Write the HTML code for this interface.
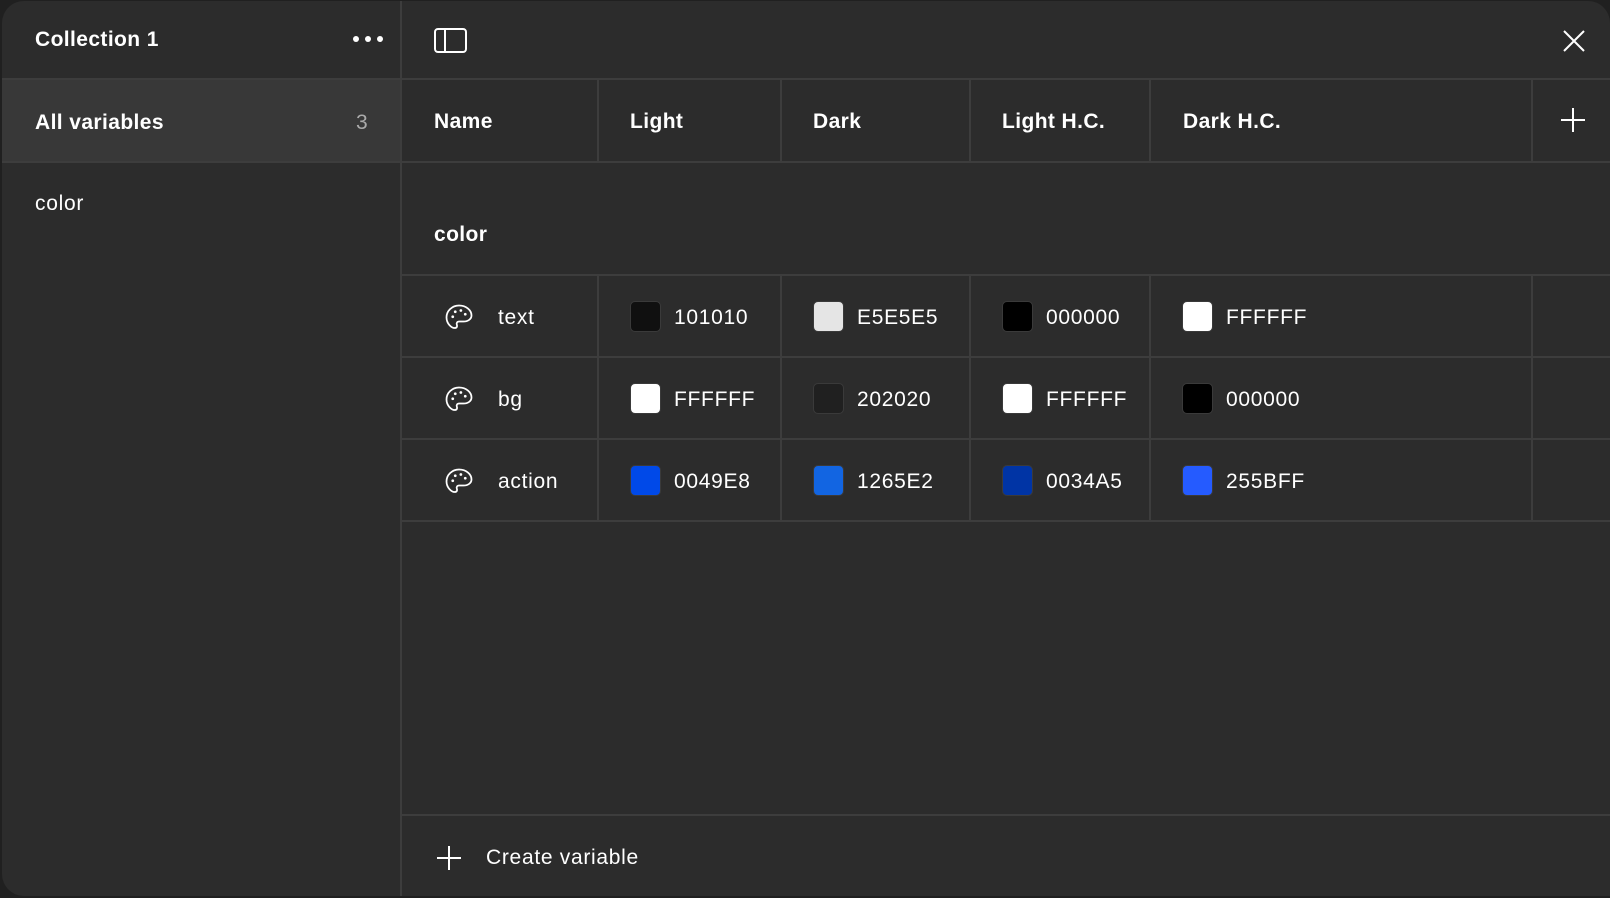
<!DOCTYPE html>
<html><head><meta charset="utf-8"><style>
*{box-sizing:border-box;margin:0;padding:0}
html,body{width:1610px;height:898px;background:#202020;overflow:hidden;font-family:"Liberation Sans",sans-serif;color:#fff}
.panel{position:absolute;left:2px;top:1px;width:1608px;height:895px;background:#2c2c2c;border-radius:22px 22px 0 22px;overflow:hidden}
.abs{position:absolute}
.hl{position:absolute;height:2px;background:#3d3d3d}
.vl{position:absolute;width:2px;background:#3d3d3d}
.t{position:absolute;font-size:21px;line-height:1;white-space:nowrap;letter-spacing:0.7px}
.b{font-weight:bold;letter-spacing:0.4px}
.sw{position:absolute;width:31px;height:31px;border-radius:5px;border:1px solid #3a3a3a}
</style></head><body>
<div class="panel">
  <div class="abs" style="left:0;top:78px;width:398px;height:83px;background:#383838"></div>
  <div class="vl" style="left:398px;top:0;height:895px"></div>
  <div class="hl" style="left:0;top:77px;width:1608px"></div>
  <div class="hl" style="left:0;top:160px;width:1608px"></div>
  <div class="t b" style="left:33px;top:28px">Collection 1</div>
  <div class="abs" style="left:351px;top:35px;width:6px;height:6px;border-radius:3px;background:#fff"></div>
  <div class="abs" style="left:363px;top:35px;width:6px;height:6px;border-radius:3px;background:#fff"></div>
  <div class="abs" style="left:375px;top:35px;width:6px;height:6px;border-radius:3px;background:#fff"></div>
  <div class="t b" style="left:33px;top:111px">All variables</div>
  <div class="t" style="left:354px;top:111px;color:#aaa">3</div>
  <div class="t" style="left:33px;top:192px">color</div>

  <svg class="abs" style="left:432px;top:27px" width="34" height="26" viewBox="0 0 34 26"><rect x="1" y="1" width="31" height="23" rx="3" fill="none" stroke="#fff" stroke-width="2"/><line x1="11" y1="1" x2="11" y2="24" stroke="#fff" stroke-width="2"/></svg>
  <svg class="abs" style="left:1560px;top:28px" width="24" height="24" viewBox="0 0 24 24"><path d="M2 2L22 22M22 2L2 22" stroke="#fff" stroke-width="2"/></svg>

  <div class="vl" style="left:595px;top:78px;height:82px"></div>
  <div class="vl" style="left:778px;top:78px;height:82px"></div>
  <div class="vl" style="left:967px;top:78px;height:82px"></div>
  <div class="vl" style="left:1147px;top:78px;height:82px"></div>
  <div class="vl" style="left:1529px;top:78px;height:82px"></div>
  <div class="t b" style="left:432px;top:110px">Name</div>
  <div class="t b" style="left:628px;top:110px">Light</div>
  <div class="t b" style="left:811px;top:110px">Dark</div>
  <div class="t b" style="left:1000px;top:110px">Light H.C.</div>
  <div class="t b" style="left:1181px;top:110px">Dark H.C.</div>
  <svg class="abs" style="left:1559px;top:107px" width="24" height="24" viewBox="0 0 24 24"><path d="M12 0V24M0 12H24" stroke="#fff" stroke-width="2"/></svg>

  <div class="t b" style="left:432px;top:223px">color</div>
  <div class="hl" style="left:398px;top:273px;width:1210px"></div>
  <div class="hl" style="left:398px;top:355px;width:1210px"></div>
  <div class="hl" style="left:398px;top:437px;width:1210px"></div>
  <div class="hl" style="left:398px;top:519px;width:1210px"></div>
  <div class="vl" style="left:595px;top:273px;height:248px"></div>
  <div class="vl" style="left:778px;top:273px;height:248px"></div>
  <div class="vl" style="left:967px;top:273px;height:248px"></div>
  <div class="vl" style="left:1147px;top:273px;height:248px"></div>
  <div class="vl" style="left:1529px;top:273px;height:248px"></div>

  <svg class="abs" style="left:442px;top:302px" width="30" height="30" viewBox="0 0 24 24"><path d="M12 2C6.5 2 2 6.3 2 11.5c0 5 4 8.5 6.5 8.5 1.8 0 2.3-1.3 1.8-2.5-.6-1.4.3-2.7 1.8-2.7h3.4C19 14.8 22 13 22 10 22 5.6 17.5 2 12 2z" fill="none" stroke="#fff" stroke-width="1.4"/><circle cx="7" cy="11" r="1.1" fill="#fff"/><circle cx="9" cy="7" r="1.1" fill="#fff"/><circle cx="13.5" cy="6" r="1.1" fill="#fff"/><circle cx="17" cy="9" r="1.1" fill="#fff"/></svg>
  <svg class="abs" style="left:442px;top:384px" width="30" height="30" viewBox="0 0 24 24"><path d="M12 2C6.5 2 2 6.3 2 11.5c0 5 4 8.5 6.5 8.5 1.8 0 2.3-1.3 1.8-2.5-.6-1.4.3-2.7 1.8-2.7h3.4C19 14.8 22 13 22 10 22 5.6 17.5 2 12 2z" fill="none" stroke="#fff" stroke-width="1.4"/><circle cx="7" cy="11" r="1.1" fill="#fff"/><circle cx="9" cy="7" r="1.1" fill="#fff"/><circle cx="13.5" cy="6" r="1.1" fill="#fff"/><circle cx="17" cy="9" r="1.1" fill="#fff"/></svg>
  <svg class="abs" style="left:442px;top:466px" width="30" height="30" viewBox="0 0 24 24"><path d="M12 2C6.5 2 2 6.3 2 11.5c0 5 4 8.5 6.5 8.5 1.8 0 2.3-1.3 1.8-2.5-.6-1.4.3-2.7 1.8-2.7h3.4C19 14.8 22 13 22 10 22 5.6 17.5 2 12 2z" fill="none" stroke="#fff" stroke-width="1.4"/><circle cx="7" cy="11" r="1.1" fill="#fff"/><circle cx="9" cy="7" r="1.1" fill="#fff"/><circle cx="13.5" cy="6" r="1.1" fill="#fff"/><circle cx="17" cy="9" r="1.1" fill="#fff"/></svg>
  <div class="t" style="left:496px;top:306px">text</div>
  <div class="t" style="left:496px;top:388px">bg</div>
  <div class="t" style="left:496px;top:470px">action</div>

  <div class="sw" style="left:628px;top:300px;background:#101010"></div><div class="t" style="left:672px;top:306px">101010</div>
  <div class="sw" style="left:811px;top:300px;background:#e5e5e5"></div><div class="t" style="left:855px;top:306px">E5E5E5</div>
  <div class="sw" style="left:1000px;top:300px;background:#000"></div><div class="t" style="left:1044px;top:306px">000000</div>
  <div class="sw" style="left:1180px;top:300px;background:#fff"></div><div class="t" style="left:1224px;top:306px">FFFFFF</div>

  <div class="sw" style="left:628px;top:382px;background:#fff"></div><div class="t" style="left:672px;top:388px">FFFFFF</div>
  <div class="sw" style="left:811px;top:382px;background:#202020"></div><div class="t" style="left:855px;top:388px">202020</div>
  <div class="sw" style="left:1000px;top:382px;background:#fff"></div><div class="t" style="left:1044px;top:388px">FFFFFF</div>
  <div class="sw" style="left:1180px;top:382px;background:#000"></div><div class="t" style="left:1224px;top:388px">000000</div>

  <div class="sw" style="left:628px;top:464px;background:#0049e8"></div><div class="t" style="left:672px;top:470px">0049E8</div>
  <div class="sw" style="left:811px;top:464px;background:#1265e2"></div><div class="t" style="left:855px;top:470px">1265E2</div>
  <div class="sw" style="left:1000px;top:464px;background:#0034a5"></div><div class="t" style="left:1044px;top:470px">0034A5</div>
  <div class="sw" style="left:1180px;top:464px;background:#255bff"></div><div class="t" style="left:1224px;top:470px">255BFF</div>

  <div class="hl" style="left:398px;top:813px;width:1210px"></div>
  <svg class="abs" style="left:435px;top:845px" width="24" height="24" viewBox="0 0 24 24"><path d="M12 0V24M0 12H24" stroke="#fff" stroke-width="2"/></svg>
  <div class="t" style="left:484px;top:846px">Create variable</div>
</div>
</body></html>
